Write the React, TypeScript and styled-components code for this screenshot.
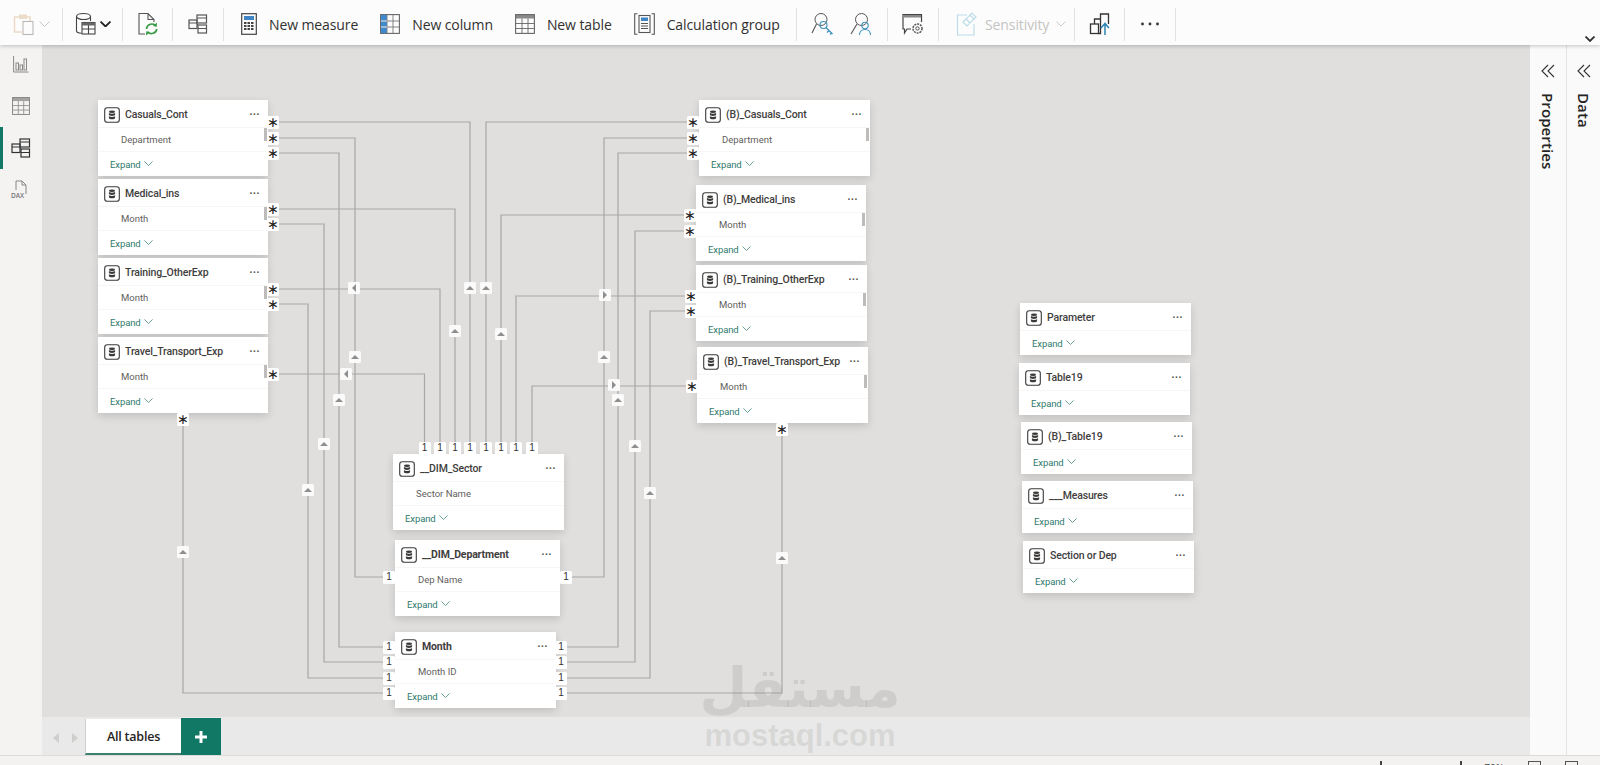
import React, { FC } from "react";
import styled, { createGlobalStyle } from "styled-components";

const GlobalStyle = createGlobalStyle`
  html, body, #root { margin: 0; padding: 0; height: 100%; }
  body { font-family: "Open Sans", "Liberation Sans", sans-serif; overflow: hidden; background: #f3f2f1; }
`;

const CANVAS_X = 42;
const CANVAS_Y = 45;

const Page = styled.div`
  width: 1600px;
  height: 765px;
  display: flex;
  flex-direction: column;
  overflow: hidden;
  position: relative;
`;

const Toolbar = styled.header`
  height: 45px;
  flex: none;
  box-sizing: border-box;
  padding-top: 3px;
  display: flex;
  align-items: center;
  background: #fcfcfc;
  box-shadow: 0 1px 4px rgba(0, 0, 0, 0.22);
  position: relative;
  z-index: 5;
`;

const ToolGroup = styled.div<{ $w: number; $pad?: number; $gap?: number }>`
  width: ${(p) => p.$w}px;
  height: 33px;
  flex: none;
  box-sizing: border-box;
  display: flex;
  align-items: center;
  justify-content: ${(p) => (p.$pad !== undefined ? "flex-start" : "center")};
  gap: ${(p) => p.$gap ?? 0}px;
  padding-left: ${(p) => p.$pad ?? 0}px;
  border-right: 1.5px solid #e3e2e0;
`;

const ToolItem = styled.div<{ $muted?: boolean }>`
  display: flex;
  align-items: center;
  gap: 12px;
  font-size: 14px;
  letter-spacing: -0.1px;
  color: ${(p) => (p.$muted ? "#c4c4c2" : "#323130")};
  white-space: nowrap;
`;

const RibbonCaret = styled.div`
  position: absolute;
  right: 5px;
  bottom: 3px;
  display: flex;
`;

const Middle = styled.div`
  flex: 1;
  min-height: 0;
  display: flex;
`;

const Rail = styled.nav`
  width: 42px;
  flex: none;
  display: flex;
  flex-direction: column;
  margin-top: -2px;
  background: #f4f3f2;
`;

const RailButton = styled.div<{ $active?: boolean }>`
  height: 42px;
  display: flex;
  align-items: center;
  justify-content: center;
  box-sizing: border-box;
  border-left: 3px solid ${(p) => (p.$active ? "#117865" : "transparent")};
  padding-right: 3px;
`;

const Center = styled.main`
  flex: 1;
  min-width: 0;
  display: flex;
  flex-direction: column;
`;

const Canvas = styled.div`
  flex: 1;
  position: relative;
  background: #e0dfdd;
  overflow: hidden;
`;

const Wires = styled.svg`
  position: absolute;
  inset: 0;
  width: 100%;
  height: 100%;
`;

const TableCard = styled.section<{ $x: number; $y: number; $w: number }>`
  position: absolute;
  left: ${(p) => p.$x - CANVAS_X}px;
  top: ${(p) => p.$y - CANVAS_Y}px;
  width: ${(p) => p.$w}px;
  background: #ffffff;
  box-shadow: 0 3px 8px rgba(0, 0, 0, 0.14);
  font-family: Roboto, "Liberation Sans", sans-serif;
`;

const CardHead = styled.div`
  height: 28px;
  display: flex;
  align-items: center;
  padding: 2px 8px 0 6px;
  gap: 5px;
  border-bottom: 1px solid #f7f6f5;
  box-sizing: border-box;
`;

const CardTitle = styled.span<{ $bold?: boolean }>`
  flex: 1;
  font-size: 10.5px;
  letter-spacing: -0.15px;
  font-weight: ${(p) => (p.$bold ? 700 : 500)};
  color: #3f3e3d;
  white-space: nowrap;
`;

const MoreDots = styled.span`
  font-size: 10px;
  line-height: 8px;
  letter-spacing: 0.6px;
  font-weight: 700;
  color: #4a4948;
  padding-bottom: 5px;
`;

const CardRow = styled.div`
  height: 24px;
  display: flex;
  align-items: center;
  padding-left: 23px;
  font-size: 9.5px;
  color: #5f5e5d;
  border-bottom: 1px solid #f8f7f6;
  box-sizing: border-box;
  position: relative;
`;

const RowThumb = styled.i`
  position: absolute;
  right: 1px;
  top: 0;
  width: 3px;
  height: 13px;
  background: #bdbcba;
`;

const CardFoot = styled.div`
  height: 24px;
  display: flex;
  align-items: center;
  gap: 3px;
  padding-left: 12px;
  font-size: 9.5px;
  letter-spacing: -0.1px;
  color: #2f7a6c;
  box-sizing: border-box;
`;

const Badge = styled.div<{ $x: number; $y: number }>`
  position: absolute;
  left: ${(p) => p.$x - CANVAS_X - 6}px;
  top: ${(p) => p.$y - CANVAS_Y - 6.5}px;
  width: 12px;
  height: 13px;
  background: #fff;
  border-radius: 1.5px;
  display: flex;
  align-items: center;
  justify-content: center;
  color: #333;
  z-index: 2;
`;

const OneMark = styled(Badge)`
  font-family: "Liberation Sans", sans-serif;
  font-size: 10px;
  line-height: 12px;
  font-weight: 400;
`;

const StarMark = styled(Badge)`
  font-family: "DejaVu Sans", sans-serif;
  font-size: 14px;
  line-height: 13px;
  color: #222;
`;

const Arrow = styled.div<{ $x: number; $y: number; $dir: "up" | "left" | "right" }>`
  position: absolute;
  left: ${(p) => p.$x - CANVAS_X - 6}px;
  top: ${(p) => p.$y - CANVAS_Y - 6}px;
  width: 12px;
  height: 12px;
  background: #fafafa;
  border-radius: 1.5px;
  display: flex;
  align-items: center;
  justify-content: center;
  z-index: 2;
  &::after {
    content: "";
    width: 0;
    height: 0;
    ${(p) =>
      p.$dir === "up"
        ? "border-left: 4px solid transparent; border-right: 4px solid transparent; border-bottom: 4px solid #8f8e8c;"
        : p.$dir === "left"
        ? "border-top: 4px solid transparent; border-bottom: 4px solid transparent; border-right: 4px solid #8f8e8c;"
        : "border-top: 4px solid transparent; border-bottom: 4px solid transparent; border-left: 4px solid #8f8e8c;"}
  }
`;

const TabBar = styled.div`
  height: 38px;
  flex: none;
  display: flex;
  align-items: flex-end;
  background: #e9e9e9;
  padding-left: 4px;
`;

const TabNav = styled.div`
  width: 39px;
  height: 35px;
  display: flex;
  align-items: center;
  justify-content: space-around;
  color: #cfcecc;
`;

const Tab = styled.div`
  width: 96px;
  height: 36px;
  box-sizing: border-box;
  background: #fff;
  border-left: 1px solid #d2d0ce;
  border-bottom: 2px solid #3f7f72;
  display: flex;
  align-items: center;
  justify-content: center;
  font-size: 12.5px;
  font-weight: 600;
  letter-spacing: -0.2px;
  color: #252423;
`;

const AddTab = styled.div`
  width: 40px;
  height: 37px;
  background: #117865;
  color: #fff;
  display: flex;
  align-items: center;
  justify-content: center;
`;

const SidePanel = styled.aside<{ $w: number; $line?: boolean }>`
  width: ${(p) => p.$w}px;
  flex: none;
  background: #fafafa;
  border-left: ${(p) => (p.$line ? "1px solid #e6e5e3" : "none")};
  box-sizing: border-box;
  display: flex;
  flex-direction: column;
  align-items: center;
  padding-top: 19px;
  gap: 15px;
`;

const SideLabel = styled.span`
  writing-mode: vertical-rl;
  font-size: 15px;
  font-weight: 600;
  letter-spacing: 0.1px;
  color: #252423;
`;

const StatusBar = styled.footer`
  height: 10px;
  flex: none;
  position: relative;
  background: #f3f2f1;
  border-top: 1px solid #dddcda;
  box-sizing: border-box;
  overflow: hidden;
  display: flex;
  justify-content: flex-end;
  align-items: flex-start;
  padding: 5px 22px 0 0;
  gap: 24px;
  font-size: 10px;
  color: #444;
`;

const ZoomTrack = styled.div`
  width: 82px;
  display: flex;
  justify-content: space-between;
  margin-right: -2px;
`;

const ZoomTick = styled.i`
  width: 2px;
  height: 12px;
  background: #444;
`;

const StatusBox = styled.i`
  width: 13px;
  height: 10px;
  border: 1px solid #555;
  box-sizing: border-box;
`;

const Watermark = styled.div`
  position: absolute;
  left: 700px;
  top: 657px;
  width: 200px;
  display: flex;
  flex-direction: column;
  align-items: center;
  gap: 2px;
  color: rgba(120, 118, 116, 0.17);
  pointer-events: none;
  z-index: 4;
`;

const WatermarkArabic = styled.span`
  font-family: "DejaVu Sans", sans-serif;
  font-weight: 700;
  font-size: 55px;
  line-height: 62px;
`;

const WatermarkLatin = styled.span`
  font-family: "Liberation Sans", sans-serif;
  font-weight: 700;
  font-size: 31px;
  line-height: 30px;
`;

const Chevron: FC<{ size?: number; color?: string; weight?: number }> = ({ size = 9, color = "#2f7a6c", weight = 0.8 }) => (
  <svg width={size} height={size * 0.6} viewBox="0 0 10 6" fill="none">
    <path d="M.5.5 5 5 9.5.5" stroke={color} strokeWidth={weight} />
  </svg>
);

const TableGlyph: FC = () => (
  <svg width="16" height="16" viewBox="0 0 16 16" fill="none" style={{ flex: "none" }}>
    <rect x=".7" y=".7" width="14.6" height="14.6" rx="2.6" stroke="#3b3a39" strokeWidth="1.1" />
    <ellipse cx="8" cy="4.7" rx="3.1" ry="1.2" fill="#3b3a39" />
    <path d="M4.9 6v1.7c0 .7 1.4 1.2 3.1 1.2s3.1-.5 3.1-1.2V6c-.7.5-1.8.8-3.1.8S5.600 6.500 4.900 6Z" fill="#3b3a39" />
    <path d="M4.900 9.200v1.700c0 .7 1.400 1.300 3.100 1.300s3.100-.6 3.100-1.300V9.200c-.7.5-1.800.8-3.100.8s-2.400-.3-3.100-.8Z" fill="#3b3a39" />
  </svg>
);

interface CardProps {
  name: string;
  field?: string;
  x: number;
  y: number;
  w: number;
  bold?: boolean;
  thumb?: boolean;
}

const Card: FC<CardProps> = ({ name, field, x, y, w, bold, thumb }) => (
  <TableCard $x={x} $y={y} $w={w}>
    <CardHead>
      <TableGlyph />
      <CardTitle $bold={bold}>{name}</CardTitle>
      <MoreDots>...</MoreDots>
    </CardHead>
    {field && (
      <CardRow>
        {field}
        {thumb && <RowThumb />}
      </CardRow>
    )}
    <CardFoot>
      Expand <Chevron />
    </CardFoot>
  </TableCard>
);

const cards: CardProps[] = [
  { name: "Casuals_Cont", field: "Department", x: 98, y: 100, w: 170, thumb: true },
  { name: "Medical_ins", field: "Month", x: 98, y: 179, w: 170, thumb: true },
  { name: "Training_OtherExp", field: "Month", x: 98, y: 258, w: 170, thumb: true },
  { name: "Travel_Transport_Exp", field: "Month", x: 98, y: 337, w: 170, thumb: true },
  { name: "(B)_Casuals_Cont", field: "Department", x: 699, y: 100, w: 171, thumb: true },
  { name: "(B)_Medical_ins", field: "Month", x: 696, y: 185, w: 170, thumb: true },
  { name: "(B)_Training_OtherExp", field: "Month", x: 696, y: 265, w: 171, thumb: true },
  { name: "(B)_Travel_Transport_Exp", field: "Month", x: 697, y: 347, w: 171, thumb: true },
  { name: "__DIM_Sector", field: "Sector Name", x: 393, y: 454, w: 171 },
  { name: "__DIM_Department", field: "Dep Name", x: 395, y: 540, w: 165, bold: true },
  { name: "Month", field: "Month ID", x: 395, y: 632, w: 161, bold: true },
  { name: "Parameter", x: 1020, y: 303, w: 171 },
  { name: "Table19", x: 1019, y: 363, w: 171 },
  { name: "(B)_Table19", x: 1021, y: 422, w: 171 },
  { name: "___Measures", x: 1022, y: 481, w: 171 },
  { name: "Section or Dep", x: 1023, y: 541, w: 171 },
];

const sectorXs = [424.5, 440, 455, 470, 486, 501, 516, 532];

// every relationship as page coordinates
const wires = [
  "M273 122H470V448",
  "M273 138H355V577H389",
  "M273 153H339V647H389",
  "M273 209H455V448",
  "M273 224H324V662H389",
  "M273 289H440V448",
  "M273 304H308V678H389",
  "M273 374H424.500V448",
  "M183 418V693H389",
  "M693 122H486V448",
  "M693 138H604V577H566",
  "M693 153H618V647H561",
  "M690 215H501V448",
  "M690 231H635V662H561",
  "M691 296H516V448",
  "M691 311H650V678H561",
  "M692 386H532V448",
  "M782 428V693H561",
];

const stars: [number, number][] = [
  [273, 122], [273, 138], [273, 153], [273, 209], [273, 224], [273, 289], [273, 304], [273, 374.5], [183, 419],
  [693, 122], [693, 138], [693, 153], [690, 215], [690, 231], [691, 296], [691, 311], [692, 386], [782, 429],
];

const ones: [number, number][] = [
  ...sectorXs.map((x): [number, number] => [x, 448]),
  [389, 577], [566, 577],
  [389, 647], [389, 662], [389, 678], [389, 693],
  [561, 647], [561, 662], [561, 678], [561, 693],
];

const arrows: { x: number; y: number; dir: "up" | "left" | "right" }[] = [
  { x: 470, y: 288, dir: "up" },
  { x: 486, y: 288, dir: "up" },
  { x: 455, y: 331, dir: "up" },
  { x: 501, y: 334, dir: "up" },
  { x: 355, y: 357, dir: "up" },
  { x: 604, y: 357, dir: "up" },
  { x: 339, y: 400, dir: "up" },
  { x: 618, y: 400, dir: "up" },
  { x: 324, y: 444, dir: "up" },
  { x: 635, y: 446, dir: "up" },
  { x: 308, y: 490, dir: "up" },
  { x: 650, y: 493, dir: "up" },
  { x: 183, y: 552, dir: "up" },
  { x: 782, y: 558, dir: "up" },
  { x: 354, y: 288, dir: "left" },
  { x: 346, y: 374, dir: "left" },
  { x: 605, y: 295, dir: "right" },
  { x: 614, y: 385, dir: "right" },
];

const CalcIcon: FC = () => (
  <svg width="16" height="22" viewBox="0 0 16 22" fill="none">
    <rect x=".7" y=".7" width="14.600" height="20.600" stroke="#444" strokeWidth="1.200" />
    <rect x="3" y="3" width="10" height="4" fill="#3f84c4" />
    {[9, 12, 15].map((y) => [3, 6.500, 10].map((x) => <rect key={`${x}${y}`} x={x} y={y} width="2.500" height="2" fill="#444" />))}
  </svg>
);

const ColumnIcon: FC = () => (
  <svg width="20" height="20" viewBox="0 0 20 20" fill="none">
    <rect x=".6" y=".6" width="18.800" height="18.800" stroke="#666" strokeWidth="1.100" />
    <rect x="1" y="1" width="6" height="18" fill="#3d8ad0" />
    <path d="M7 1v18M13 1v18M1 7h18M1 13h18" stroke="#777" strokeWidth=".9" />
    <path d="M1 7h6M1 13h6" stroke="#fff" strokeWidth=".9" />
  </svg>
);

const TableIcon: FC<{ color?: string; size?: number }> = ({ color = "#666", size = 20 }) => (
  <svg width={size} height={size} viewBox="0 0 20 20" fill="none">
    <rect x=".6" y=".6" width="18.800" height="18.800" stroke={color} strokeWidth="1.100" />
    <rect x="1" y="1" width="18" height="3.500" fill={color} opacity=".75" />
    <path d="M7 4.500V19M13 4.500V19M1 9.500h18M1 14.500h18" stroke={color} strokeWidth=".9" />
  </svg>
);

const CalcGroupIcon: FC = () => (
  <svg width="21" height="22" viewBox="0 0 21 22" fill="none">
    <path d="M3.500.7H.7v20.600h2.800M17.500.7h2.800v20.600h-2.800" stroke="#555" strokeWidth="1.100" />
    <rect x="5" y="2.500" width="11" height="17" stroke="#555" strokeWidth="1.100" />
    <rect x="7" y="4.500" width="7" height="3.500" fill="#3f84c4" />
    <path d="M7 10.500h7M7 13h7M7 15.500h7" stroke="#555" strokeWidth="1.200" />
  </svg>
);

const ModelIcon: FC<{ size?: number; color?: string }> = ({ size = 20, color = "#555" }) => (
  <svg width={size} height={size} viewBox="0 0 20 20" fill="none" stroke={color} strokeWidth="1.200">
    <rect x="1" y="6" width="8" height="8.500" />
    <rect x="9" y="1" width="9.500" height="8" />
    <rect x="10" y="11" width="8.500" height="8" />
    <path d="M1 9h8M9 10.500h1M10 14.500h8.500M9 4h9.500" />
  </svg>
);

const PasteIcon: FC = () => (
  <svg width="24" height="24" viewBox="0 0 24 24" fill="none">
    <path d="M5 5h3M15 5h3v5M5 5H2.500v15H10" stroke="#edd9c3" strokeWidth="1.500" />
    <rect x="7" y="2.500" width="8" height="4.500" fill="#ecdcca" />
    <rect x="11" y="9.500" width="10" height="13" stroke="#b9b8b6" strokeWidth="1.100" />
  </svg>
);

const DataSourceIcon: FC = () => (
  <svg width="21" height="24" viewBox="0 0 21 24" fill="none" stroke="#444" strokeWidth="1.100">
    <path d="M1.500 4.500v14.500c0 1.200 2 2 5 2.200M15.500 4.500V9" />
    <ellipse cx="8.500" cy="4.500" rx="7" ry="3" />
    <rect x="7" y="10.500" width="13" height="11.500" />
    <path d="M7 17h13M13.500 10.500V22" />
    <rect x="7" y="10.500" width="13" height="3" fill="#666" stroke="none" />
  </svg>
);

const RefreshIcon: FC = () => (
  <svg width="22" height="24" viewBox="0 0 22 24" fill="none">
    <path d="M8 22H2V1.500h9l6 6V10M11 1.500v6h6" stroke="#555" strokeWidth="1.100" />
    <path d="M9.500 17a5.500 5.500 0 0 1 9.500-3.200M19.800 17A5.500 5.500 0 0 1 10.500 20" stroke="#3a9c47" strokeWidth="1.600" />
    <path d="m20 10.500-.2 4.200-4-.6zM9 23.500l.2-4.200 4 .6z" fill="#3a9c47" />
  </svg>
);

const KeySearchIcon: FC = () => (
  <svg width="24" height="24" viewBox="0 0 24 24" fill="none">
    <circle cx="10" cy="7.500" r="6" stroke="#555" strokeWidth="1" />
    <path d="M5.500 12 1 21" stroke="#555" strokeWidth="1.100" />
    <circle cx="12.500" cy="13" r="3.500" stroke="#3a8fbd" strokeWidth="1.100" />
    <path d="m15 15.500 6.500 6.500M18 18.500l-2 2M20.500 21l-1.500 1.500" stroke="#3a8fbd" strokeWidth="1.200" />
  </svg>
);

const UserSearchIcon: FC = () => (
  <svg width="24" height="24" viewBox="0 0 24 24" fill="none">
    <circle cx="12.500" cy="7.500" r="6" stroke="#555" strokeWidth="1" />
    <path d="M8 12 2 22" stroke="#555" strokeWidth="1.100" />
    <circle cx="16" cy="13.500" r="3.200" stroke="#3a8fbd" strokeWidth="1.100" />
    <path d="M10.500 23c0-3.500 2.500-5.500 5.500-5.500s5.500 2 5.500 5.500" stroke="#3a8fbd" strokeWidth="1.100" />
  </svg>
);

const RoleGearIcon: FC = () => (
  <svg width="22" height="22" viewBox="0 0 22 22" fill="none">
    <path d="M9 16H5l-2.500 4v-4H1V1.500h18.500V9" stroke="#444" strokeWidth="1.200" />
    <rect x="1.500" y="2" width="17.500" height="2.500" fill="#888" />
    <circle cx="15.500" cy="15.500" r="4.500" stroke="#555" strokeWidth="1.500" strokeDasharray="2 .9" />
    <circle cx="15.500" cy="15.500" r="1.700" stroke="#555" />
  </svg>
);

const SensitivityIcon: FC = () => (
  <svg width="22" height="24" viewBox="0 0 22 24" fill="none" stroke="#bcdcea" strokeWidth="1.200">
    <path d="M11 3H1.500v20H18V12" />
    <path d="m7 10 7-7 4 4-7 7zM14 3l2-2 4 4-2 2M10 7l4 4" />
  </svg>
);

const PublishIcon: FC = () => (
  <svg width="24" height="24" viewBox="0 0 24 24" fill="none">
    <rect x="2.500" y="12" width="8" height="9.500" stroke="#333" strokeWidth="1.300" />
    <path d="M6.500 12V7h6v14.500h-2M12.500 8V2h8v10" stroke="#333" strokeWidth="1.300" />
    <path d="M17 23V12M13 16l4-4.500 4 4.500" stroke="#2d84b4" strokeWidth="1.500" />
  </svg>
);

const BarsIcon: FC = () => (
  <svg width="16" height="18" viewBox="0 0 16 18" fill="none" stroke="#8a8886" strokeWidth="1">
    <path d="M.6 1v16h15" />
    <rect x="3" y="8" width="2.500" height="7" />
    <rect x="7" y="10" width="2.500" height="5" />
    <rect x="11" y="4" width="2.500" height="11" />
  </svg>
);

const DaxIcon: FC = () => (
  <svg width="20" height="20" viewBox="0 0 20 20" fill="none">
    <path d="M5 10V1h6l4 4v9" stroke="#8a8886" strokeWidth="1" />
    <path d="M11 1v4h4" stroke="#8a8886" strokeWidth="1" />
    <text x="0" y="18" fontSize="6.500" fontWeight="600" fontFamily="Open Sans, sans-serif" fill="#777">
      DAX
    </text>
  </svg>
);

const DoubleLeft: FC = () => (
  <svg width="14" height="14" viewBox="0 0 14 14" fill="none" stroke="#333" strokeWidth="1.100">
    <path d="M7 1 1 7l6 6M13 1 7 7l6 6" />
  </svg>
);

const SmallArrow: FC<{ right?: boolean }> = ({ right }) => (
  <svg width="6" height="10" viewBox="0 0 6 10">
    <path d={right ? "M0 0l6 5-6 5z" : "M6 0 0 5l6 5z"} fill="#cfcecc" />
  </svg>
);

const App: FC = () => (
  <Page>
    <GlobalStyle />
    <Toolbar>
      <ToolGroup $w={63} $gap={3}>
        <PasteIcon />
        <Chevron size={11} color="#c8c6c4" weight={0.9} />
      </ToolGroup>
      <ToolGroup $w={60} $gap={4}>
        <DataSourceIcon />
        <Chevron size={11} color="#222" weight={1.6} />
      </ToolGroup>
      <ToolGroup $w={50}>
        <RefreshIcon />
      </ToolGroup>
      <ToolGroup $w={51}>
        <ModelIcon />
      </ToolGroup>
      <ToolGroup $w={573} $pad={17} $gap={22}>
        <ToolItem>
          <CalcIcon />
          New measure
        </ToolItem>
        <ToolItem>
          <ColumnIcon />
          New column
        </ToolItem>
        <ToolItem>
          <TableIcon />
          New table
        </ToolItem>
        <ToolItem>
          <CalcGroupIcon />
          Calculation group
        </ToolItem>
      </ToolGroup>
      <ToolGroup $w={91} $gap={14}>
        <KeySearchIcon />
        <UserSearchIcon />
      </ToolGroup>
      <ToolGroup $w={51}>
        <RoleGearIcon />
      </ToolGroup>
      <ToolGroup $w={136} $pad={17} $gap={7}>
        <SensitivityIcon />
        <ToolItem $muted>Sensitivity</ToolItem>
        <Chevron size={10} color="#c8c6c4" weight={0.9} />
      </ToolGroup>
      <ToolGroup $w={50}>
        <PublishIcon />
      </ToolGroup>
      <ToolGroup $w={51}>
        <svg width="20" height="4" viewBox="0 0 20 4" fill="#333">
          <circle cx="2.500" cy="2" r="1.400" />
          <circle cx="10" cy="2" r="1.400" />
          <circle cx="17.500" cy="2" r="1.400" />
        </svg>
      </ToolGroup>
      <RibbonCaret>
        <Chevron size={10} color="#333" weight={1.8} />
      </RibbonCaret>
    </Toolbar>
    <Middle>
      <Rail>
        <RailButton>
          <BarsIcon />
        </RailButton>
        <RailButton>
          <TableIcon color="#8a8886" size={18} />
        </RailButton>
        <RailButton $active>
          <ModelIcon color="#333" />
        </RailButton>
        <RailButton>
          <DaxIcon />
        </RailButton>
      </Rail>
      <Center>
        <Canvas>
          <Wires viewBox={`${CANVAS_X} ${CANVAS_Y} 1488 672`} preserveAspectRatio="xMinYMin">
            {wires.map((d) => (
              <path key={d} d={d} fill="none" stroke="#a8a7a5" strokeWidth="1.200" />
            ))}
          </Wires>
          {cards.map((c) => (
            <Card key={c.name} {...c} />
          ))}
          {stars.map(([x, y]) => (
            <StarMark key={`${x}-${y}`} $x={x} $y={y}>
              ∗
            </StarMark>
          ))}
          {ones.map(([x, y]) => (
            <OneMark key={`${x}-${y}`} $x={x} $y={y}>
              1
            </OneMark>
          ))}
          {arrows.map((a) => (
            <Arrow key={`${a.x}-${a.y}`} $x={a.x} $y={a.y} $dir={a.dir} />
          ))}
        </Canvas>
        <TabBar>
          <TabNav>
            <SmallArrow />
            <SmallArrow right />
          </TabNav>
          <Tab>All tables</Tab>
          <AddTab>
            <svg width="12" height="12" viewBox="0 0 12 12" fill="#fff">
              <path d="M4.500 0h3v4.500H12v3H7.500V12h-3V7.500H0v-3h4.500z" />
            </svg>
          </AddTab>
        </TabBar>
      </Center>
      <SidePanel $w={36}>
        <DoubleLeft />
        <SideLabel>Properties</SideLabel>
      </SidePanel>
      <SidePanel $w={34} $line>
        <DoubleLeft />
        <SideLabel>Data</SideLabel>
      </SidePanel>
    </Middle>
    <StatusBar>
      <ZoomTrack>
        <ZoomTick />
        <ZoomTick />
      </ZoomTrack>
      <span>70%</span>
      <StatusBox />
      <StatusBox />
    </StatusBar>
    <Watermark>
      <WatermarkArabic>مستقل</WatermarkArabic>
      <WatermarkLatin>mostaql.com</WatermarkLatin>
    </Watermark>
  </Page>
);

export default App;
